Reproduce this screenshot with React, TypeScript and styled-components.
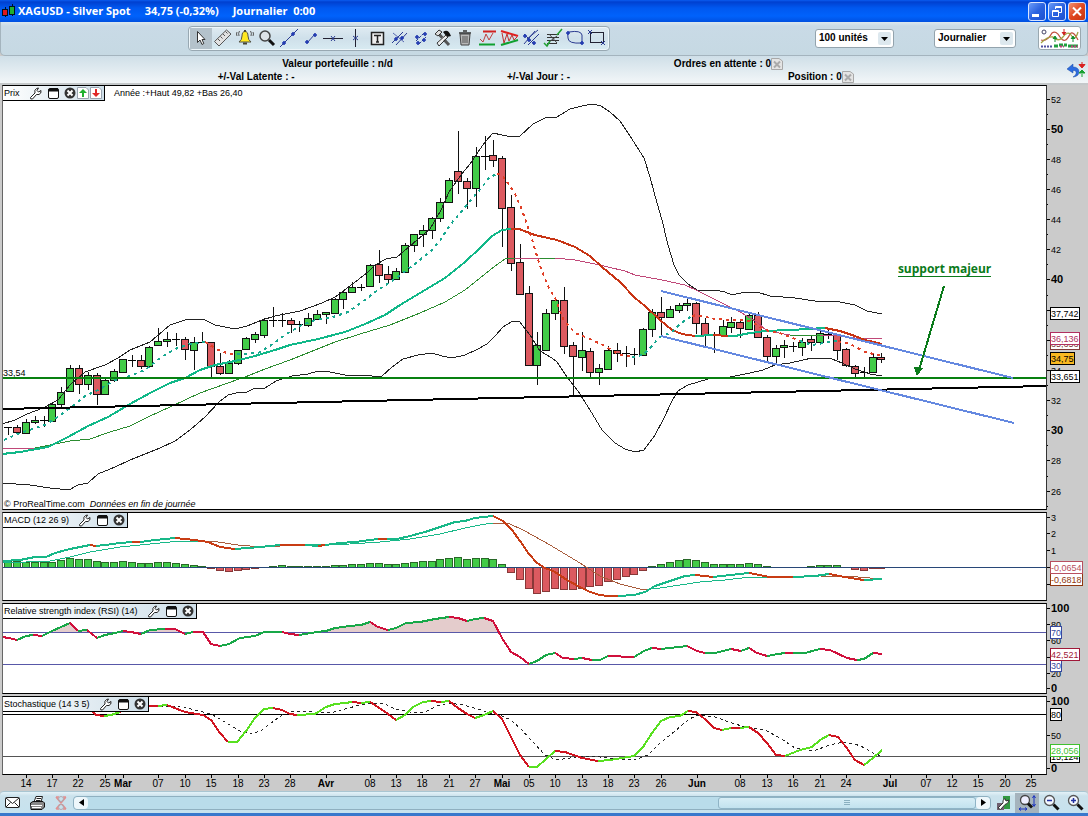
import React from "react";
import styled, { createGlobalStyle } from "styled-components";

const GlobalStyle = createGlobalStyle`
  * { box-sizing: border-box; }
  body {
    margin: 0;
    background: #cbcbcb;
    color: #000;
    font: 10px/12px "Liberation Sans", Arial, sans-serif;
  }
  button, select { font: inherit; color: inherit; }
  svg { display: block; }
`;

/* ---------- layout ---------- */

const Page = styled.div`
  display: flex;
  flex-direction: column;
  min-height: 100vh;
  background: #cbcbcb;
`;

const TitleBar = styled.header`
  display: flex;
  align-items: center;
  height: 22px;
  padding: 0 2px;
  color: #fff;
  background: linear-gradient(#0a5cf0 0, #0040d0 2px, #0058f0 8px, #0062fc 16px, #0050e0 22px);
`;

const Title = styled.h1`
  display: flex;
  gap: 14px;
  flex: 1;
  margin: 0 0 0 2px;
  font: bold 11px/16px "Open Sans", sans-serif;
  white-space: pre;
`;

const WindowButton = styled.button<{ $close?: boolean }>`
  width: 18px;
  height: 19px;
  margin-left: 2px;
  padding: 0;
  border: 1px solid #d8e4ff;
  border-radius: 3px;
  background: ${(p) =>
    p.$close
      ? "linear-gradient(135deg, #f09070, #e04820 50%, #c83410)"
      : "linear-gradient(135deg, #6a9cf8, #2a62e0 50%, #1c50d0)"};
`;

const Toolbar = styled.div`
  display: flex;
  align-items: center;
  height: 34px;
  padding: 0 6px 1px 187px;
  border: 1px solid #a4b4be;
  border-top: 0;
  border-radius: 0 0 5px 5px;
  background: linear-gradient(#dbe7ef 0, #c9dae6 4px, #c6d9e3 100%);
`;

const ToolGroup = styled.div`
  display: flex;
  height: 25px;
  padding: 1px;
  border: 1px solid #98a8b2;
  border-radius: 4px;
  background: linear-gradient(#dfebf2, #cfe0ea 50%, #d8ebf2);
  box-shadow: inset 0 0 0 1px #eef6fa;
`;

const ToolButton = styled.button<{ $active?: boolean }>`
  display: grid;
  place-items: center;
  width: 22px;
  padding: 0;
  border: 0;
  background: ${(p) => (p.$active ? "#b4c2cb" : "none")};
`;

const Spacer = styled.div`
  flex: 1;
`;

const SelectBox = styled.div<{ $gap: number; $width: number }>`
  position: relative;
  width: ${(p) => p.$width}px;
  margin-right: ${(p) => p.$gap}px;
  svg {
    position: absolute;
    right: 3px;
    top: 3px;
    pointer-events: none;
  }
`;

const Select = styled.select`
  appearance: none;
  width: 100%;
  height: 19px;
  padding: 0 18px 0 3px;
  border: 1px solid #93a3ad;
  border-radius: 3px;
  background: #fff;
  font-weight: bold;
`;

const ChartButton = styled.button`
  width: 43px;
  height: 24px;
  padding: 1px;
  border: 1px solid #9aa8b0;
  border-radius: 3px;
  background: #fff;
`;

const Info = styled.section`
  display: flex;
  align-items: center;
  padding: 1px 2px 0 0;
  border-bottom: 2px solid #c4c8ca;
  font-weight: bold;
  background: linear-gradient(#cfdfe8, #f2f6f8);
`;

const InfoRows = styled.div`
  flex: 1;
`;

const InfoRow = styled.div<{ $columns: number; $left: number; $right: number }>`
  display: grid;
  grid-template-columns: repeat(${(p) => p.$columns}, 1fr);
  padding: 0 ${(p) => p.$right}px 0 ${(p) => p.$left}px;
  line-height: 13px;
`;

const InfoCell = styled.div`
  display: flex;
  justify-content: center;
  align-items: center;
  white-space: pre;
`;

const PlainButton = styled.button`
  display: block;
  padding: 0;
  border: 0;
  background: none;
`;

const Charts = styled.main`
  display: flex;
  flex-direction: column;
  gap: 2px;
  padding-left: 2px;
  font-size: 9px;
`;

const PaneRow = styled.section`
  display: grid;
  grid-template-columns: 1fr 41px;
`;

const Plot = styled.div`
  position: relative;
  border: 1px solid #000;
  border-left-color: #666;
  border-right-color: #333;
  background: #fff;
`;

const PaneHeader = styled.div`
  position: absolute;
  left: 0;
  top: 0;
  display: flex;
  align-items: center;
  gap: 1px;
  height: 15px;
  padding: 0 2px 0 1px;
  border-right: 1px solid #000;
  border-bottom: 1px solid #000;
  background: linear-gradient(90deg, #fff, #cfdfe9);
`;

const PaneName = styled.span`
  margin-right: 8px;
`;

const HeaderIconGroup = styled.span`
  display: flex;
  align-items: center;
  gap: 4px;
`;

const Legend = styled.span`
  position: absolute;
  left: 111px;
  top: 1px;
`;

const LevelLabel = styled.span`
  position: absolute;
  left: 0;
  top: 281px;
`;

const Copyright = styled.span`
  position: absolute;
  left: 1px;
  bottom: -1px;
`;

const Annotation = styled.span`
  position: absolute;
  left: 85.8%;
  top: 176px;
  border-bottom: 1px solid #0a7a1a;
  color: #0a7a1a;
  font: bold 12px/14px "Open Sans", sans-serif;
`;

const TimeRow = styled.div`
  padding: 0 42px 0 1px;
  margin-top: -2px;
`;

const StatusBar = styled.footer`
  display: flex;
  align-items: center;
  height: 22px;
  padding: 0 1px;
  border-top: 1px solid #a9c6d2;
  border-radius: 4px 4px 0 0;
  background: linear-gradient(#e4f2f8, #cbe2ec 4px, #c6e2ee);
`;

const StatusButton = styled.button<{ $active?: boolean }>`
  display: grid;
  place-items: center;
  width: 24px;
  height: 20px;
  padding: 0;
  border: 0;
  background: ${(p) => (p.$active ? "#a5b3bd" : "none")};
`;

const ScrollTrack = styled.div`
  display: flex;
  flex: 1;
  height: 14px;
  border: 1px solid #8fb0c0;
  border-radius: 4px;
  background: #b9dcea;
`;

const ScrollArrow = styled.button`
  display: grid;
  place-items: center;
  width: 14px;
  padding: 0;
  border: 0;
  border-radius: 4px;
  background: #eef7fb;
`;

const ScrollRail = styled.div`
  flex: 1;
  display: flex;
  justify-content: flex-end;
`;

const ScrollThumb = styled.div`
  display: grid;
  place-items: center;
  width: 29%;
  border: 1px solid #8fb4c6;
  border-radius: 3px;
  background: linear-gradient(#d8eef6, #c2e2ee);
`;

const BottomEdge = styled.div`
  flex: 1;
  min-height: 3px;
  background: #3878cc;
`;

/* ---------- chart data ---------- */

const GREEN = "#42cc48";
const RED = "#dc5a60";

const barX = (i: number) => 8.4 + i * 8.818;

// body top, body bottom, wick top, wick bottom, kind (u = up, d = down, x = doji)
const candles: [number, number, number, number, string][] = [
  [427, 427, 427, 435, "x"], [427, 432, 425, 435, "d"], [422, 433, 419, 433, "u"],
  [420, 422, 416, 424, "u"], [420, 420, 416, 427, "x"], [404, 421, 403, 421, "u"],
  [392, 404, 387, 407, "u"], [368, 391, 365, 391, "u"], [368, 384, 365, 394, "d"],
  [375, 384, 372, 390, "u"], [375, 394, 373, 405, "d"], [380, 394, 377, 394, "u"],
  [371, 380, 369, 382, "u"], [359, 372, 359, 372, "u"], [360, 360, 355, 367, "x"],
  [360, 366, 355, 369, "d"], [347, 366, 346, 366, "u"], [341, 345, 328, 345, "u"],
  [339, 341, 332, 347, "u"], [339, 339, 333, 346, "x"], [339, 349, 337, 360, "d"],
  [342, 350, 337, 370, "u"], [342, 342, 332, 343, "x"], [342, 366, 342, 377, "d"],
  [366, 373, 353, 375, "d"], [363, 373, 360, 374, "u"], [350, 363, 350, 365, "u"],
  [338, 349, 337, 350, "u"], [334, 339, 332, 343, "u"], [320, 335, 318, 338, "u"],
  [320, 320, 307, 327, "x"], [320, 320, 313, 327, "x"], [320, 324, 318, 333, "d"],
  [324, 324, 321, 332, "x"], [318, 325, 313, 327, "u"], [314, 319, 310, 319, "u"],
  [312, 314, 312, 324, "u"], [299, 313, 298, 313, "u"], [292, 299, 290, 309, "u"],
  [287, 292, 282, 293, "u"], [287, 287, 284, 291, "x"], [265, 286, 264, 287, "u"],
  [264, 275, 250, 283, "d"], [274, 279, 266, 283, "d"], [271, 279, 268, 280, "u"],
  [245, 272, 243, 272, "u"], [234, 245, 234, 252, "u"], [230, 234, 225, 247, "u"],
  [218, 230, 217, 239, "u"], [202, 218, 198, 222, "u"], [180, 202, 178, 202, "u"],
  [171, 181, 131, 194, "d"], [181, 188, 178, 209, "d"], [156, 188, 147, 207, "u"],
  [156, 156, 136, 170, "x"], [155, 160, 140, 167, "d"], [158, 208, 156, 247, "d"],
  [207, 263, 195, 271, "d"], [262, 294, 244, 295, "d"], [293, 365, 286, 366, "d"],
  [345, 365, 332, 385, "u"], [313, 350, 309, 351, "u"], [300, 313, 298, 320, "u"],
  [300, 346, 287, 354, "d"], [345, 356, 342, 396, "d"], [350, 357, 332, 371, "u"],
  [351, 372, 348, 377, "d"], [368, 372, 364, 385, "u"], [350, 369, 346, 369, "u"],
  [350, 353, 343, 362, "d"], [353, 353, 346, 367, "x"], [354, 354, 348, 365, "x"],
  [329, 355, 328, 356, "u"], [312, 329, 309, 337, "u"], [312, 317, 297, 335, "d"],
  [309, 317, 306, 318, "u"], [305, 310, 303, 313, "u"], [303, 305, 297, 311, "u"],
  [303, 323, 302, 334, "d"], [323, 335, 318, 347, "d"], [335, 335, 332, 353, "x"],
  [326, 335, 320, 336, "u"], [322, 327, 317, 333, "u"], [322, 328, 319, 338, "d"],
  [315, 329, 314, 330, "u"], [315, 337, 312, 338, "d"], [337, 356, 335, 361, "d"],
  [348, 356, 345, 365, "u"], [345, 347, 340, 358, "u"], [346, 346, 342, 352, "x"],
  [342, 347, 338, 356, "u"], [339, 342, 336, 351, "d"], [333, 342, 331, 345, "u"],
  [334, 334, 328, 339, "x"], [335, 350, 334, 360, "d"], [349, 365, 348, 367, "d"],
  [366, 373, 365, 379, "d"], [372, 372, 367, 377, "x"], [357, 372, 354, 372, "u"],
  [357, 359, 353, 363, "d"],
];

const histogram = [
  6, 6, 5, 5, 5, 5, 7, 9, 8, 8, 6, 5, 5, 6, 5, 4, 4, 5, 5, 4, 3, 2, 1, -1, -3, -4, -3, -2, -1, 0,
  1, 2, 1, 1, 1, 1, 1, 2, 2, 3, 3, 4, 4, 3, 3, 4, 5, 6, 6, 8, 9, 10, 8, 9, 9, 8, 3, -5, -12, -21,
  -26, -24, -21, -22, -22, -21, -19, -18, -14, -12, -9, -7, -3, 1, 3, 5, 7, 8, 7, 5, 3, 3, 3, 3,
  4, 3, 1, 0, 0, 0, 0, 1, 2, 2, 2, 0, -2, -3, -1, -1,
];

const upperBand =
  "2,424 15,420 27,414 43,408 58,400 70,385 85,372 105,365 118,358 130,350 150,342 170,325 185,320 203,319 215,325 235,329 247,326 262,320 275,316 300,311 322,303 335,297 350,286 368,272 375,265 386,259 397,257 410,246 430,229 441,210 449,192 461,175 470,164 476,155 485,142 493,133 502,135 512,137 520,136 533,124 545,118 557,117 570,109 582,106 593,104 601,106 610,112 620,121 630,136 644,158 650,177 657,203 662,220 668,245 674,265 679,275 688,284 697,290 715,290 725,292 732,295 745,292 757,292 770,296 795,298 815,301 840,302 855,305 867,311 882,314";
const lowerBand =
  "2,483 30,485 50,488 69,490 78,485 88,483 98,474 115,467 130,460 160,448 175,441 190,430 205,417 219,402 228,395 240,392 247,392 255,388 265,388 276,381 292,376 308,374 318,371 330,372 350,376 362,375 381,377 392,367 403,359 418,355 432,353 442,356 452,358 465,355 478,349 487,344 495,336 503,327 511,322 519,321 530,335 540,351 552,358 557,362 567,377 578,391 590,410 602,430 615,443 625,449 635,452 644,450 655,435 663,420 672,401 678,391 688,385 698,382 708,379 730,377 750,373 763,370 775,365 790,363 812,358 832,359 842,363 855,369 870,374 882,376";

// A letter before a point gives the colour of the stroke that runs into it.
const ma20 =
  "t2,454 20,452 48,447 68,437 88,426 108,417 130,404 150,393 170,383 185,378 200,370 215,365 235,361 255,356 275,350 290,345 318,339 345,332 365,324 385,315 400,305 420,293 445,278 465,262 480,248 492,236 502,230 511,229 r519,229 535,235 548,238 557,240 575,247 590,256 602,267 620,282 635,298 645,306 660,320 672,330 682,334 695,336 t713,335 r728,336 t735,336 750,333 765,331 790,330 825,328 r840,331 855,336 865,340 882,344";
const ma50 =
  "m2,448 35,448 g45,446 70,441 90,439 110,432 130,426 150,416 170,407 185,400 200,393 225,384 245,377 265,369 290,360 310,352 335,342 360,334 390,325 420,313 445,302 465,290 480,278 495,266 505,259 515,258 m540,259 g555,258 m575,260 595,264 625,271 635,275 662,280 685,285 696,290 720,302 740,312 757,322 767,331 790,335 g820,335 m840,336 855,338 882,338";
const ma7 =
  "t4,440 20,433 45,425 58,417 70,408 85,396 100,389 115,380 130,376 145,370 160,358 175,349 190,344 205,342 r218,350 230,354 237,354 t242,354 258,353 270,346 285,335 300,326 315,320 330,318 348,312 362,302 378,290 398,277 412,266 430,252 440,241 450,225 465,207 478,192 490,177 497,174 r501,174 506,180 515,194 522,210 530,233 540,266 548,286 556,300 563,319 575,333 590,339 605,346 618,354 632,357 t643,355 650,348 660,337 672,332 680,324 692,316 r697,315 715,319 735,320 750,321 765,330 780,333 800,341 t812,345 830,342 838,341 r850,344 865,352 882,356";

const macdLine =
  "t2,561 20,560 35,557 46,557 55,553 70,549 90,545 r96,546 t105,545 120,543 132,542 r140,542 t155,540 175,538 r195,540 208,542 220,547 235,549 t260,547 280,545 r305,545 t318,546 r325,545 t340,543 355,542 370,540 378,539 r387,539 t397,539 410,536 425,532 440,527 455,522 465,521 475,518 493,516 r503,521 512,530 520,541 529,554 537,563 545,568 555,572 567,580 580,587 590,592 600,595 608,596 618,596 t634,595 645,592 655,586 670,581 685,576 695,575 r713,577 t730,575 749,573 r770,577 793,577 t815,576 829,574 r845,577 857,579 864,580 t882,579";
const macdSignal =
  "t2,563 50,561 70,557 90,552 120,547 150,544 180,541 200,541 b218,542 238,545 262,547 280,546 t300,545 350,544 380,542 410,539 440,534 465,528 480,525 493,523 b508,523 525,531 550,545 580,563 600,576 620,584 640,589 650,589 t660,588 680,585 700,582 725,580 750,577 775,577 820,576 b858,577 882,579";

const rsiLine =
  "r2,637 9,638 17,640 g26,636 33,635 r42,636 g52,631 61,627 70,623 r78,631 g87,630 r97,638 g105,635 115,633 123,631 r131,632 141,634 g150,630 165,629 r175,629 185,634 g193,632 r203,632 211,644 220,646 g229,644 240,638 255,636 264,632 282,632 r290,634 299,635 g317,632 326,631 335,628 350,626 361,625 370,622 r378,627 388,630 g396,628 406,623 420,622 435,619 449,617 r458,618 467,621 g475,619 484,618 r493,621 502,638 511,652 520,657 529,664 g537,661 546,655 555,653 r563,658 574,659 g582,658 r592,660 g600,660 608,656 r634,657 g644,651 652,648 r661,649 g687,646 r697,651 705,653 g715,653 731,649 r741,651 g749,648 r757,653 767,656 g778,654 785,653 r793,653 g805,653 820,649 r830,650 847,658 857,660 g864,659 873,653 r882,654";

const stochLine =
  "r90,709 96,715 104,716 g111,715 120,712 r135,705 158,706 g167,705 r185,712 203,715 211,720 220,733 228,742 g237,742 246,731 255,718 264,709 273,708 r282,710 290,714 297,715 g315,714 326,707 335,704 345,703 352,702 r361,703 g370,702 r378,707 388,714 396,720 g405,715 413,707 423,702 431,701 r441,702 g449,701 r458,708 467,714 475,718 g484,715 493,711 r502,719 511,737 520,755 529,767 g537,767 546,759 555,751 r565,752 582,758 598,761 g610,760 634,756 643,747 652,733 661,721 670,717 680,716 688,711 r696,712 706,720 714,728 722,730 g731,728 r740,728 g749,727 r758,733 767,743 776,755 785,756 g800,750 812,747 820,740 829,735 r838,737 846,747 855,760 864,765 g873,758 882,750";
const stochSignal =
  "112,712 125,710 150,706 167,706 180,706 195,710 211,714 225,722 240,731 252,734 262,730 275,720 285,713 297,711 315,712 330,713 345,709 360,705 375,703 385,704 395,709 410,712 425,712 437,706 449,703 463,705 478,709 490,713 502,716 511,720 522,730 532,741 545,755 557,760 570,758 583,756 600,757 615,759 635,760 648,755 660,743 675,731 688,720 697,715 715,717 732,723 745,727 765,730 780,738 795,748 813,751 830,745 843,742 855,744 865,748 875,754 882,756";

const timeTicks: [number, string][] = [
  [26, "14"], [52, "17"], [78, "22"], [105, "25"], [123, "Mar"], [158, "07"], [185, "10"],
  [211, "15"], [238, "18"], [264, "23"], [290, "28"], [326, "Avr"], [370, "08"], [396, "13"],
  [422, "18"], [449, "21"], [475, "27"], [502, "Mai"], [529, "05"], [555, "10"], [582, "13"],
  [608, "18"], [634, "23"], [661, "26"], [697, "Jun"], [740, "08"], [767, "13"], [793, "16"],
  [820, "21"], [846, "24"], [890, "Jul"], [926, "07"], [952, "12"], [978, "15"], [1005, "20"],
  [1031, "25"],
];

/* ---------- chart parts ---------- */

type Colors = Record<string, string>;

function ColorLine({ data, colors, width = 1, dash }: { data: string; colors: Colors; width?: number; dash?: string }) {
  const runs: { color: string; points: string[] }[] = [];
  let previous = "";
  for (const token of data.split(" ")) {
    const marked = /[a-z]/.test(token[0]);
    const point = marked ? token.slice(1) : token;
    if (marked) runs.push({ color: colors[token[0]], points: previous ? [previous] : [] });
    runs[runs.length - 1].points.push(point);
    previous = point;
  }
  return (
    <>
      {runs.map((run, i) => (
        <polyline key={i} points={run.points.join(" ")} fill="none" stroke={run.color} strokeWidth={width} strokeDasharray={dash} />
      ))}
    </>
  );
}

function PlotArea({ top, height, children }: { top: number; height: number; children: React.ReactNode }) {
  return (
    <svg width="100%" height={height} viewBox={`3 ${top} 1043 ${height}`} preserveAspectRatio="none" shapeRendering="crispEdges">
      {children}
    </svg>
  );
}

type Tick = { y: number; label?: string; bold?: boolean; major?: boolean };
type Tag = { y: number; label: string; color?: string; fill?: string; width?: number };

function Axis({ top, height, ticks, tags }: { top: number; height: number; ticks: Tick[]; tags: Tag[] }) {
  return (
    <svg width="41" height={height} viewBox={`1047 ${top} 41 ${height}`}>
      {ticks.map((t, i) => (
        <g key={i}>
          <rect x="1047" y={Math.round(t.y)} width={t.label || t.major ? 3 : 1} height="1" />
          {t.label && (
            <text x="1051" y={Math.round(t.y) + 4} fontSize={t.bold ? 11 : 9} fontWeight={t.bold ? "bold" : "normal"}>
              {t.label}
            </text>
          )}
        </g>
      ))}
      {tags.map((t, i) => (
        <g key={i}>
          <rect x="1050.5" y={t.y - 6 + 0.5} width={t.width ?? 29} height="12" fill={t.fill ?? "#fff"} stroke={t.color ?? "#000"} />
          <text x="1051" y={t.y + 4} fontSize="9" fill={t.color ?? "#000"}>
            {t.label}
          </text>
        </g>
      ))}
    </svg>
  );
}

/* ---------- icons ---------- */

const Wrench = () => (
  <svg width="14" height="13" viewBox="0 0 14 13">
    <path d="M1.5 10.5 L6 6 Q5 3 7.5 1.5 L9.5 1 L8 3.5 L9.5 5 L12 3.5 Q12.5 6.5 10 7.5 L7.5 7.5 L3.5 12 Q1 12.5 1.5 10.5 Z" fill="#fff" stroke="#222" />
  </svg>
);
const Maximize = () => (
  <svg width="13" height="13" viewBox="0 0 13 13">
    <rect x="1.5" y="1.5" width="10" height="10" rx="1.5" fill="#fff" stroke="#111" />
    <path d="M1.5 4.5 V2 H4 L6 1 H11 V4.5 Z" fill="#111" />
  </svg>
);
const CloseRound = () => (
  <svg width="12" height="12" viewBox="0 0 12 12">
    <circle cx="6" cy="6" r="5.5" fill="#333" />
    <path d="M3.5 3.5 L8.5 8.5 M8.5 3.5 L3.5 8.5" stroke="#fff" strokeWidth="2" />
  </svg>
);
const ArrowBox = ({ color, down }: { color: string; down?: boolean }) => (
  <svg width="12" height="12" viewBox="0 0 12 12">
    <path d="M0.5 0.500 H9 L11.500 3 V11.500 H0.500 Z" fill="#fff" stroke="#9aa4b0" />
    <path d={down ? "M6 10 L2 6 H5 V2 H7 V6 H10 Z" : "M6 2 L2 6 H5 V10 H7 V6 H10 Z"} fill={color} />
  </svg>
);
const CancelBox = () => (
  <svg width="12" height="12" viewBox="0 0 12 12">
    <path d="M0.5 0.5 H8 L11.5 3 V11.5 H0.5 Z" fill="#e4e4e4" stroke="#a8a8a8" />
    <path d="M3 3.500 L9 9.500 M9 3.500 L3 9.500" stroke="#aaa" strokeWidth="2" />
  </svg>
);
const Arrow = () => (
  <svg width="13" height="13" viewBox="0 0 13 13">
    <rect width="13" height="13" rx="2" fill="#dde8ee" />
    <path d="M3 5 H10 L6.5 9 Z" fill="#000" />
  </svg>
);

const navy = { stroke: "#2a3a90", fill: "none" };
const Cross = ({ x, y }: { x: number; y: number }) => (
  <path d={`M${x - 2} ${y} h4 M${x} ${y - 2} v4`} stroke="#2038b0" strokeWidth="1.6" />
);

const tools: { name: string; art: React.ReactNode }[] = [
  { name: "Sélection", art: <path d="M6.5 3.5 V14.5 L9 12 L11 16.5 L12.8 15.5 L11 11.5 H14 Z" fill="#fff" stroke="#333" /> },
  { name: "Règle", art: <g><path d="M1.500 13.500 L13.500 2 L18 6 L6 18 Z" fill="#e2e2e2" stroke="#555" /><path d="M5 11 l2 2 M7.500 8.500 l2 2 M10 6 l2 2 M12.500 3.500 l2 2" stroke="#555" /></g> },
  { name: "Alerte", art: <g><path d="M4 14 Q7 12 7 8 Q7 3.500 10 3.500 Q13 3.500 13 8 Q13 12 16 14 Z" fill="#ffe820" stroke="#554" /><path d="M8 15.500 H12 M10 2 V4" stroke="#443" strokeWidth="2" /><path d="M4.500 3 Q3 5 4 8 M2 4 Q1 6 2 8 M15.500 3 Q17 5 16 8 M18 4 Q19 6 18 8" fill="none" stroke="#555" /></g> },
  { name: "Loupe", art: <g><circle cx="8" cy="8" r="5" fill="#dde2e6" stroke="#444" strokeWidth="1.500" /><path d="M12 12 L17 17" stroke="#111" strokeWidth="3" /></g> },
  { name: "Droite", art: <g><path d="M1 19 L19 1" {...navy} /><Cross x={5} y={15} /><Cross x={14} y={6} /></g> },
  { name: "Segment", art: <g><path d="M6 15 L14 6" {...navy} /><Cross x={6} y={14} /><Cross x={14} y={7} /></g> },
  { name: "Ligne horizontale", art: <g><path d="M0 10.500 H20" stroke="#223" /><path d="M8 8 L12 13 M12 8 L8 13" {...navy} /></g> },
  { name: "Ligne verticale", art: <g><path d="M10.500 1 V19" stroke="#223" /><path d="M8 8 L13 12 M13 8 L8 12" {...navy} /></g> },
  { name: "Texte", art: <g><rect x="4.500" y="4.500" width="12" height="12" fill="#eee" stroke="#222" strokeWidth="1.500" /><path d="M7 7.500 H14 M10.500 7 V14 M9 14 H12" stroke="#222" strokeWidth="1.500" /></g> },
  { name: "Parallèles", art: <g><path d="M3 15 L14 4 M7 17 L18 5" {...navy} /><path d="M4 5 L15 14" stroke="#5868b0" /><Cross x={7} y={11} /><Cross x={13} y={10} /></g> },
  { name: "Canal", art: <g><path d="M5 13 L13 5 M8 16 L15 9" {...navy} strokeDasharray="3 1" /><Cross x={6} y={9} /><Cross x={14} y={6} /><Cross x={7} y={15} /><Cross x={13} y={12} /></g> },
  { name: "Outils", art: <g><path d="M4 4 L16 17" stroke="#555" strokeWidth="3" /><path d="M15 6 L5 16" stroke="#eee" strokeWidth="3" /><path d="M2 6 L6 2 L9 4 L5 8 Z" fill="#ddd" stroke="#333" /><path d="M10 4 Q15 0 18 8 L14 9 Z" fill="#111" /><path d="M4 15 L13 7 L15 9 L6 18 Z" fill="none" stroke="#333" /></g> },
  { name: "Supprimer", art: <g><path d="M5 6 H15 L14 17 H6 Z" fill="#b8b8b8" stroke="#444" /><path d="M4 5 H16 M8 3 H12" stroke="#333" strokeWidth="1.300" /><path d="M8 8 V15 M10 8 V15 M12 8 V15" stroke="#555" /></g> },
  { name: "Support et résistance", art: <g><path d="M6 3.500 H19" stroke="#d02020" strokeWidth="2" /><path d="M2 16.500 H18" stroke="#10a030" strokeWidth="2" /><path d="M3 11 L6 14 L9 6 L12 12 L16 5" fill="none" stroke="#c04040" /></g> },
  { name: "Triangle", art: <g><path d="M2 3 L19 8" stroke="#e02020" strokeWidth="2" /><path d="M2 17 L19 12" stroke="#10a030" strokeWidth="2" /><path d="M3 5 L5 15 L8 6 L10 13 L13 7 L15 12 L18 9" fill="none" stroke="#c03030" /></g> },
  { name: "Fourchette", art: <g><path d="M3 6 L13 16 M3 16 L14 3 M7 17 L18 6 M6 11 L17 2" {...navy} /><Cross x={4} y={8} /><Cross x={8} y={12} /><Cross x={13} y={15} /></g> },
  { name: "Fibonacci", art: <g><path d="M4 6.500 H16 M4 9.500 H16 M4 12.500 H16 M4 15.500 H14" stroke="#333" /><path d="M6 6 L14 15 M14 8 L6 14" stroke="#444" /><path d="M1 15 L4 18 L7 13 M14 7 L19 1" fill="none" stroke="#20a030" strokeWidth="1.500" /></g> },
  { name: "Ellipse", art: <g><path d="M4 4 Q16 2 17 7 Q17 11 17 15 Q3 16 3 10 Q2 6 4 4" {...navy} /><Cross x={3} y={5} /><Cross x={17} y={15} /></g> },
  { name: "Rectangle", art: <g><rect x="3.500" y="4.500" width="13" height="10" fill="none" stroke="#223" /><path d="M1 2 L5 6 M5 2 L1 6 M14 13 L18 17 M18 13 L14 17" {...navy} /></g> },
];

const ChartArt = () => (
  <svg width="39" height="20" viewBox="0 0 39 20">
    <path d="M1 12 Q7 14 12 5 Q16 2 20 9 Q25 17 30 6 Q33 2 38 12" fill="none" stroke="#c05040" strokeWidth="1.300" />
    <path d="M1 15 Q8 8 13 9 Q18 14 22 10 Q28 2 31 7 Q35 14 38 4" fill="none" stroke="#a0a040" strokeWidth="1.300" />
    <circle cx="4" cy="4" r="2" fill="none" stroke="#446" />
    <path d="M24 1 V6 M22 4 L24 7 L26 4" stroke="#d02020" fill="#d02020" />
    <path d="M15 14 V9 M13 11 L15 8 L17 11 M33 14 V9 M31 11 L33 8 L35 11" stroke="#109030" fill="#109030" />
    <path d="M1 18.500 H13" stroke="#5050a0" strokeDasharray="2 1" strokeWidth="2" />
    <path d="M14 18 H18 M19 17 H23 M24 17 H27 M28 18 H38" stroke="#20a040" strokeWidth="3" />
    <path d="M20 18.500 H24 M31 18.500 H38" stroke="#c04080" strokeDasharray="2 1" strokeWidth="2" />
  </svg>
);

const Magnifier = ({ sign }: { sign: "+" | "-" }) => (
  <svg width="17" height="17" viewBox="0 0 17 17">
    <circle cx="6.500" cy="6.500" r="5" fill="#f4f8ff" stroke="#555" strokeWidth="1.300" />
    <path d={sign === "+" ? "M4 6.500 H9 M6.500 4 V9" : "M4 6.500 H9"} stroke="#2030a0" strokeWidth="1.500" />
    <path d="M10.500 10.500 L15.500 15.500" stroke="#111" strokeWidth="3" />
  </svg>
);

function HeaderIcons() {
  return (
    <HeaderIconGroup>
      <PlainButton aria-label="Paramètres"><Wrench /></PlainButton>
      <PlainButton aria-label="Agrandir"><Maximize /></PlainButton>
      <PlainButton aria-label="Fermer"><CloseRound /></PlainButton>
    </HeaderIconGroup>
  );
}

/* ---------- axis settings ---------- */

// Values whose label lies wholly behind a price tag keep their tick only.
const taggedPrices = [38, 36];

const priceTicks: Tick[] = Array.from({ length: 28 }, (_, i) => {
  const value = 52 - i;
  const major = value % 2 === 0;
  return {
    y: 98.5 + i * 15.08,
    label: major && !taggedPrices.includes(value) ? String(value) : undefined,
    bold: value % 10 === 0,
    major,
  };
});

const maColors: Colors = { t: "#10b888", r: "#c83414", g: "#2c8c30", m: "#c04878" };
const dottedColors: Colors = { t: "#18a890", r: "#e04028" };
const macdColors: Colors = { t: "#18b888", r: "#c83c14", b: "#a85c3c" };
const rsiColors: Colors = { g: "#18a848", r: "#d0103c" };
const stochColors: Colors = { g: "#58e020", r: "#d01420" };

export default function App() {
  const rsiArea = rsiLine.replace(/[a-z]/g, "");
  return (
    <Page>
      <GlobalStyle />
      <TitleBar>
        <svg width="14" height="16" viewBox="0 0 14 16">
          <path d="M3.500 4 V14 M10.500 1 V13" stroke="#012" />
          <rect x="0.500" y="6.500" width="5" height="6" fill="#e01818" stroke="#012" />
          <rect x="7.500" y="3.500" width="5" height="8" fill="#20b030" stroke="#012" />
        </svg>
        <Title>
          <span>XAGUSD - Silver Spot</span>
          <span>34,75 (-0,32%)</span>
          <span>Journalier  0:00</span>
        </Title>
        <WindowButton aria-label="Réduire">
          <svg width="16" height="17" viewBox="0 0 16 17"><rect x="3" y="11" width="7" height="3" fill="#fff" /></svg>
        </WindowButton>
        <WindowButton aria-label="Restaurer">
          <svg width="16" height="17" viewBox="0 0 16 17"><path d="M6.500 6 V3.500 H12.500 V9.500 H10 M3.500 7.500 H9.500 V13.500 H3.500 Z M3.500 8.500 H9.500 M6.500 4.500 H12.500" fill="none" stroke="#fff" /></svg>
        </WindowButton>
        <WindowButton $close aria-label="Fermer">
          <svg width="16" height="17" viewBox="0 0 16 17"><path d="M4 4.500 L12 12.500 M12 4.500 L4 12.500" stroke="#fff" strokeWidth="2" /></svg>
        </WindowButton>
      </TitleBar>

      <Toolbar>
        <ToolGroup>
          {tools.map((tool, i) => (
            <ToolButton key={tool.name} $active={i === 0} aria-label={tool.name}>
              <svg width="20" height="20" viewBox="0 0 20 20">{tool.art}</svg>
            </ToolButton>
          ))}
        </ToolGroup>
        <Spacer />
        <SelectBox $width={79} $gap={40}>
          <Select aria-label="Nombre d'unités" defaultValue="100"><option value="100">100 unités</option></Select>
          <Arrow />
        </SelectBox>
        <SelectBox $width={82} $gap={22}>
          <Select aria-label="Période" defaultValue="j"><option value="j">Journalier</option></Select>
          <Arrow />
        </SelectBox>
        <ChartButton aria-label="Indicateurs"><ChartArt /></ChartButton>
      </Toolbar>

      <Info>
        <InfoRows>
          <InfoRow $columns={2} $left={142} $right={142}>
            <InfoCell>Valeur portefeuille : n/d</InfoCell>
            <InfoCell>Ordres en attente : 0<CancelBox /></InfoCell>
          </InfoRow>
          <InfoRow $columns={3} $left={115} $right={104}>
            <InfoCell>+/-Val Latente : -</InfoCell>
            <InfoCell>+/-Val Jour : -</InfoCell>
            <InfoCell>Position : 0<CancelBox /></InfoCell>
          </InfoRow>
        </InfoRows>
        <PlainButton aria-label="Passer un ordre">
          <svg width="20" height="18" viewBox="0 0 20 18">
            <path d="M7 3 L1 8 L7 12 V9.500 Q11 9 10 13 Q9 15 7 16 Q13 15.500 13 10.500 Q12.500 6 7 6 Z" fill="#2c6ce0" stroke="#1848a0" strokeWidth="0.500" />
            <path d="M16 1 V4 M13 3.500 H19 L16 7 Z" fill="#d82020" stroke="#d82020" />
            <path d="M16 16 V13 M13 12 H19 L16 9 Z" fill="#18a030" stroke="#18a030" />
          </svg>
        </PlainButton>
      </Info>

      <Charts>
        <PaneRow>
          <Plot>
            <PlotArea top={86} height={423}>
              {candles.map(([top, bottom, high, low, kind], i) => {
                const x = Math.round(barX(i));
                return (
                  <g key={i}>
                    <rect x={x - 0.5} y={high} width="1" height={low - high} fill="#111" />
                    {kind === "x" ? (
                      <rect x={x - 4} y={top} width="8" height="1" />
                    ) : (
                      <rect x={x - 3.5} y={top + 0.5} width="7" height={bottom - top} fill={kind === "u" ? GREEN : RED} stroke="#111" />
                    )}
                  </g>
                );
              })}
              <polyline points={upperBand} fill="none" stroke="#222" />
              <polyline points={lowerBand} fill="none" stroke="#222" />
              <ColorLine data={ma50} colors={maColors} />
              <ColorLine data={ma20} colors={maColors} width={2} />
              <ColorLine data={ma7} colors={dottedColors} width={2} dash="3 4" />
              <path d="M2 409 L1046 386" stroke="#000" strokeWidth="2" />
              <path d="M2 377.5 H1046" stroke="#088010" strokeWidth="2" />
              <path d="M661 291 L1013 378 M661 336 L1014 423" stroke="#6488e0" strokeWidth="2" fill="none" />
              <path d="M944 286 L919 370" stroke="#0a7a1a" strokeWidth="2" />
              <path d="M914 367 L923 368 L917 376 Z" fill="#0a7a1a" />
            </PlotArea>
            <PaneHeader>
              <PaneName>Prix</PaneName>
              <HeaderIcons />
              <PlainButton aria-label="Acheter"><ArrowBox color="#20b030" /></PlainButton>
              <PlainButton aria-label="Vendre"><ArrowBox color="#e02828" down /></PlainButton>
            </PaneHeader>
            <Legend>Année :+Haut 49,82 +Bas 26,40</Legend>
            <LevelLabel>33,54</LevelLabel>
            <Annotation>support majeur</Annotation>
            <Copyright>© ProRealTime.com&nbsp; <i>Données en fin de journée</i></Copyright>
          </Plot>
          <Axis
            top={85}
            height={425}
            ticks={priceTicks}
            tags={[
              { y: 313, label: "37,742" },
              { y: 343, label: "35,656", color: "#803838" },
              { y: 338, label: "36,136", color: "#b03060" },
              { y: 358, label: "34,75", fill: "#f8b820", width: 24 },
              { y: 376, label: "33,651" },
            ]}
          />
        </PaneRow>

        <PaneRow>
          <Plot>
            <PlotArea top={513} height={87}>
              {histogram.map((h, i) => {
                const x = Math.round(barX(i));
                if (!h) return null;
                return (
                  <rect key={i} x={x - 3.5} y={h > 0 ? 567.5 - h : 567.5} width="7" height={Math.abs(h)} fill={h > 0 ? GREEN : RED} stroke={h > 0 ? "#286828" : "#883838"} />
                );
              })}
              <path d="M2 567.5 H1046" stroke="#284878" />
              <ColorLine data={macdSignal} colors={macdColors} />
              <ColorLine data={macdLine} colors={macdColors} width={2} />
            </PlotArea>
            <PaneHeader>
              <PaneName>MACD (12 26 9)</PaneName>
              <HeaderIcons />
            </PaneHeader>
          </Plot>
          <Axis
            top={512}
            height={89}
            ticks={[{ y: 517, label: "3" }, { y: 533, label: "2" }, { y: 550, label: "1" }, { y: 567, major: true }, { y: 584, major: true }]}
            tags={[
              { y: 579, label: "-0,6818", color: "#903810", width: 32 },
              { y: 567, label: "-0,0654", color: "#b85060", width: 32 },
            ]}
          />
        </PaneRow>

        <PaneRow>
          <Plot>
            <PlotArea top={604} height={89}>
              <clipPath id="overbought"><rect x="0" y="604" width="1046" height="28" /></clipPath>
              <polygon points={`${rsiArea} 882,632 2,632`} fill="#e4cccc" clipPath="url(#overbought)" />
              <path d="M2 632.5 H1046 M2 664.5 H1046" stroke="#5858a8" />
              <ColorLine data={rsiLine} colors={rsiColors} width={2} />
            </PlotArea>
            <PaneHeader>
              <PaneName>Relative strength index (RSI) (14)</PaneName>
              <HeaderIcons />
            </PaneHeader>
          </Plot>
          <Axis
            top={603}
            height={91}
            ticks={[
              { y: 608, label: "100", bold: true }, { y: 624, label: "80" }, { y: 640, label: "60" },
              { y: 657, major: true }, { y: 673, label: "20" }, { y: 688, label: "0", bold: true },
            ]}
            tags={[
              { y: 632, label: "70", color: "#3848a0", width: 11 },
              { y: 665, label: "30", color: "#3848a0", width: 11 },
              { y: 654, label: "42,521", color: "#a01838" },
            ]}
          />
        </PaneRow>

        <PaneRow>
          <Plot>
            <PlotArea top={697} height={77}>
              <path d="M2 714.5 H1046" stroke="#000" />
              <path d="M2 756.5 H1046" stroke="#555" />
              <polyline points={stochSignal} fill="none" stroke="#222" strokeDasharray="3 3" />
              <ColorLine data={stochLine} colors={stochColors} width={2} />
            </PlotArea>
            <PaneHeader>
              <PaneName>Stochastique (14 3 5)</PaneName>
              <HeaderIcons />
            </PaneHeader>
          </Plot>
          <Axis
            top={696}
            height={79}
            ticks={[{ y: 701, label: "100", bold: true }, { y: 735, label: "50" }, { y: 768, label: "0", bold: true }]}
            tags={[
              { y: 714, label: "80", width: 11 },
              { y: 756, label: "15,124" },
              { y: 750, label: "28,056", color: "#40c030" },
            ]}
          />
        </PaneRow>

        <TimeRow>
          <svg width="100%" height="16">
            {timeTicks.map(([x, label]) => {
              const left = `${((x - 3) / 1043) * 100}%`;
              const month = /[A-Z]/.test(label);
              return (
                <g key={x}>
                  <rect x={left} y="0" width="1" height="3" />
                  <text x={left} y="12" textAnchor="middle" fontSize="10" fontWeight={month ? "bold" : "normal"}>
                    {label}
                  </text>
                </g>
              );
            })}
          </svg>
        </TimeRow>
      </Charts>

      <StatusBar>
        <StatusButton aria-label="Envoyer">
          <svg width="16" height="12" viewBox="0 0 16 12"><rect x="0.500" y="0.500" width="14" height="10" rx="1" fill="#fff" stroke="#222" /><path d="M1 1 L7.500 6.500 L14 1 M1 10 L5.500 5.500 M14 10 L9.500 5.500" fill="none" stroke="#222" /></svg>
        </StatusButton>
        <StatusButton aria-label="Imprimer">
          <svg width="17" height="16" viewBox="0 0 17 16"><path d="M5 7 L7 1.500 H13.500 L12 7" fill="#fff" stroke="#222" /><path d="M7.500 3.500 H12 M7 5.500 H11.500" stroke="#222" /><path d="M1.500 8 L4 6.500 H14 L15.500 8 V12 L13 14.500 H2 Z" fill="#888" stroke="#111" /><path d="M2 10.500 H13 M3 12.500 H12" stroke="#fff" /></svg>
        </StatusButton>
        <StatusButton aria-label="Déconnecter">
          <svg width="14" height="16" viewBox="0 0 14 16"><path d="M2 2 L12 14 M12 2 L2 14 M2 2 H5 M9 2 H12 M2 14 H5 M9 14 H12" stroke="#e09090" strokeWidth="1.500" /><circle cx="7" cy="4" r="2.500" fill="none" stroke="#b0a8b0" /><circle cx="7" cy="12" r="2.500" fill="none" stroke="#b0a8b0" /></svg>
        </StatusButton>
        <ScrollTrack>
          <ScrollArrow aria-label="Défiler à gauche"><svg width="5" height="7" viewBox="0 0 5 7"><path d="M5 0 V7 L0 3.500 Z" /></svg></ScrollArrow>
          <ScrollRail>
            <ScrollThumb><svg width="6" height="5" viewBox="0 0 6 5"><path d="M0 0.500 H6 M0 2.500 H6 M0 4.500 H6" stroke="#8ab0c0" /></svg></ScrollThumb>
          </ScrollRail>
          <ScrollArrow aria-label="Défiler à droite"><svg width="5" height="7" viewBox="0 0 5 7"><path d="M0 0 V7 L5 3.500 Z" /></svg></ScrollArrow>
        </ScrollTrack>
        <StatusButton aria-label="Réglages">
          <svg width="15" height="16" viewBox="0 0 15 16"><rect x="7" y="1" width="7" height="13" fill="#309840" /><rect x="1" y="8" width="7" height="7" fill="#706070" /><path d="M2 13 L7 8 Q6 5 9 3.500 L10 6 L13 5 Q12.500 9 9 9.500 L4.500 14.500 Z" fill="#fff" stroke="#333" /></svg>
        </StatusButton>
        <StatusButton $active aria-label="Zoom automatique">
          <svg width="18" height="17" viewBox="0 0 18 17"><circle cx="7" cy="6" r="4.500" fill="#eef" stroke="#444" strokeWidth="1.300" /><path d="M10 9.500 L14 13.500" stroke="#111" strokeWidth="3" /><path d="M16 2 V12 M14.500 4 L16 1.500 L17.500 4 M14.500 10 L16 12.500 L17.500 10 M1 15 H9 M3 13.500 L1 15 L3 16.500 M7 13.500 L9 15 L7 16.500" fill="none" stroke="#1830c0" /></svg>
        </StatusButton>
        <StatusButton aria-label="Zoom arrière"><Magnifier sign="-" /></StatusButton>
        <StatusButton aria-label="Zoom avant"><Magnifier sign="+" /></StatusButton>
      </StatusBar>
      <BottomEdge />
    </Page>
  );
}
